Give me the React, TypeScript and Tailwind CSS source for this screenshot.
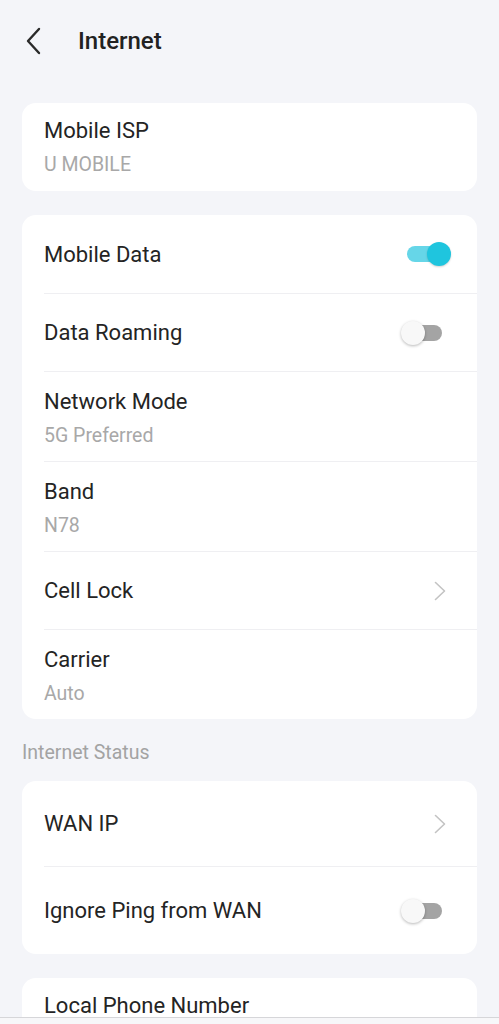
type Row =
  | { kind: 'toggle'; title: string; on: boolean }
  | { kind: 'value'; title: string; value: string }
  | { kind: 'link'; title: string };

const font = { fontFamily: 'Roboto, "Noto Sans", sans-serif' };

function Toggle({ on }: { on: boolean }) {
  return (
    <div className="relative w-[50px] h-[24px] shrink-0">
      <div
        className={`absolute left-[6px] right-[9px] top-[4px] h-[16px] rounded-full ${
          on ? 'bg-[#66d6e8]' : 'bg-[#a4a4a4]'
        }`}
      />
      <div
        className={`absolute top-0 w-[24px] h-[24px] rounded-full ${
          on
            ? 'right-0 bg-[#1fc5de] shadow-[0_1px_2px_rgba(0,0,0,0.18)]'
            : 'left-0 bg-[#f8f8f8] shadow-[0_1px_3px_rgba(0,0,0,0.28)]'
        }`}
      />
    </div>
  );
}

function Chevron() {
  return (
    <svg width="14" height="20" viewBox="0 0 14 20" className="mr-[4px] shrink-0">
      <path d="M2.5 1.5 L11.5 10 L2.5 18.5" fill="none" stroke="#c3c3c3" strokeWidth="1.6" strokeLinecap="round" strokeLinejoin="round" />
    </svg>
  );
}

function SettingRow({ row, first, height }: { row: Row; first: boolean; height?: string }) {
  const divider = first ? '' : 'border-t border-[#efeff2]';
  if (row.kind === 'value') {
    return (
      <div className={`ml-[22px] pr-[26px] pt-[15px] pb-[11px] ${divider}`}>
        <div className="text-[22px] leading-[30px] text-[#242424]">{row.title}</div>
        <div className="mt-[5px] text-[19.5px] leading-[28px] text-[#a8a8a8]">{row.value}</div>
      </div>
    );
  }
  return (
    <div className={`ml-[22px] pr-[26px] flex items-center justify-between ${height ?? 'h-[78px]'} ${divider}`}>
      <span className="text-[22px] text-[#242424]">{row.title}</span>
      {row.kind === 'toggle' ? <Toggle on={row.on} /> : <Chevron />}
    </div>
  );
}

function Card({ children }: { children: React.ReactNode }) {
  return <div className="mx-[22px] bg-white rounded-[14px] overflow-hidden">{children}</div>;
}

const mobileRows: Row[] = [
  { kind: 'toggle', title: 'Mobile Data', on: true },
  { kind: 'toggle', title: 'Data Roaming', on: false },
  { kind: 'value', title: 'Network Mode', value: '5G Preferred' },
  { kind: 'value', title: 'Band', value: 'N78' },
  { kind: 'link', title: 'Cell Lock' },
  { kind: 'value', title: 'Carrier', value: 'Auto' },
];

export default function App() {
  return (
    <div style={font} className="h-screen flex flex-col bg-[#f4f5f9] overflow-hidden">
      <div className="flex-1 overflow-hidden">
        <header className="h-[82px] flex items-center pl-[24px]">
          <svg width="20" height="28" viewBox="0 0 20 28" className="shrink-0">
            <path d="M15 2 L4 14 L15 26" fill="none" stroke="#2a2a2a" strokeWidth="2.4" strokeLinecap="round" strokeLinejoin="round" />
          </svg>
          <h1 className="ml-[34px] text-[24px] font-medium text-[#222]">Internet</h1>
        </header>

        <div className="pt-[21px]">
          <Card>
            <div className="pl-[22px] pt-[13px] pb-[12px]">
              <div className="text-[22px] leading-[30px] text-[#242424]">Mobile ISP</div>
              <div className="mt-[5px] text-[19.5px] leading-[28px] text-[#a8a8a8]">U MOBILE</div>
            </div>
          </Card>

          <div className="h-[24px]" />
          <Card>
            {mobileRows.map((row, i) => (
              <SettingRow key={row.title} row={row} first={i === 0} />
            ))}
          </Card>

          <div className="mt-[22px] mb-[16px] px-[22px] text-[19.5px] leading-[24px] text-[#a3a3a3]">Internet Status</div>
          <Card>
            <SettingRow row={{ kind: 'link', title: 'WAN IP' }} first height="h-[85px]" />
            <SettingRow row={{ kind: 'toggle', title: 'Ignore Ping from WAN', on: false }} first={false} height="h-[88px]" />
          </Card>

          <div className="h-[24px]" />
          <Card>
            <div className="pl-[22px] pt-[13px] pb-[12px]">
              <div className="text-[22px] leading-[30px] text-[#242424]">Local Phone Number</div>
            </div>
          </Card>
        </div>
      </div>
      <div className="h-[7px] shrink-0 bg-[#f7f7f9] border-t border-[#d6d6d9]" />
    </div>
  );
}
